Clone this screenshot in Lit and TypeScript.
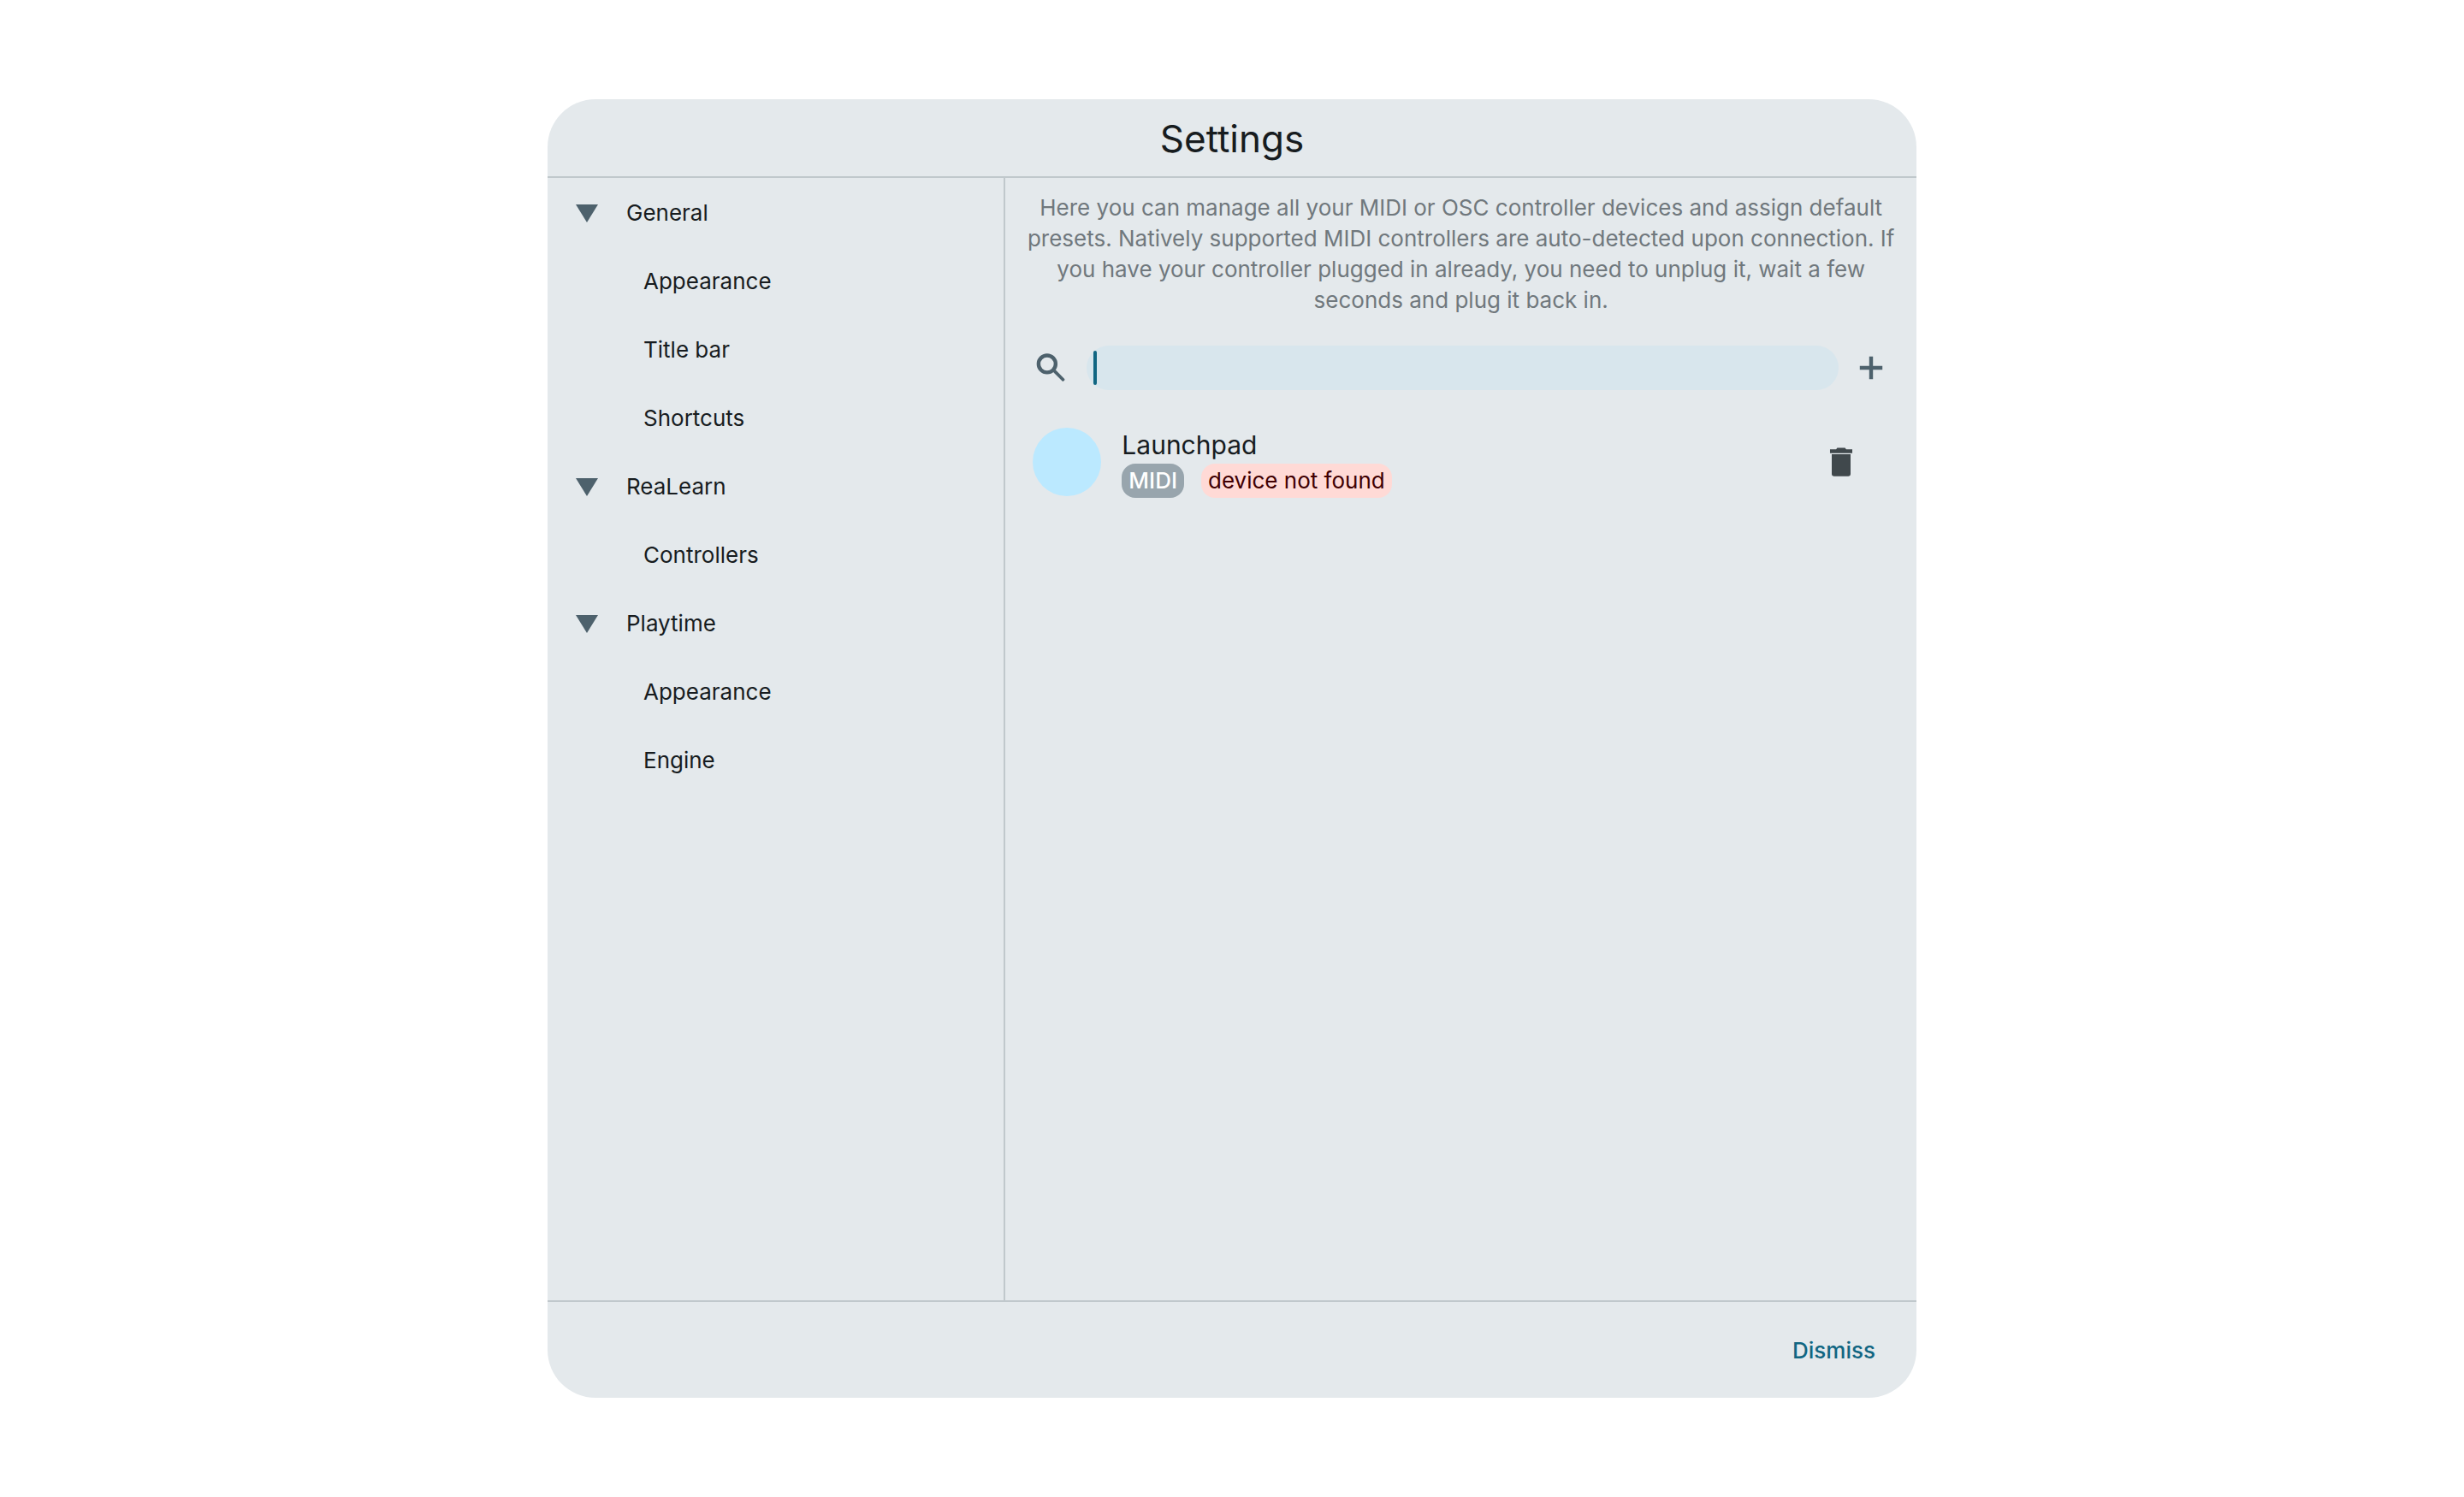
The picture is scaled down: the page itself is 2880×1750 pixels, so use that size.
import { LitElement, html, css, svg } from "lit";
import { customElement, state } from "lit/decorators.js";

interface NavGroup {
  title: string;
  items: string[];
}

interface Device {
  name: string;
  protocol: string;
  problem: string;
}

const NAV: NavGroup[] = [
  { title: "General", items: ["Appearance", "Title bar", "Shortcuts"] },
  { title: "ReaLearn", items: ["Controllers"] },
  { title: "Playtime", items: ["Appearance", "Engine"] },
];

const icon = (shape: unknown) => html`
  <svg class="icon" viewBox="0 0 24 24" aria-hidden="true">${shape}</svg>
`;

const SEARCH = svg`<circle cx="9.2" cy="9.5" r="5.45" fill="none" stroke="currentColor" stroke-width="2.4"/><path d="M12.600 14.700l1.700-1.700 6 6.100q.3.400 0 .8l-.6.600q-.4.300-.8 0l-5.400-5.400v-.3z"/>`;
const ADD = svg`<path d="M19.200 13.200h-6v6h-2.400v-6h-6v-2.400h6v-6h2.400v6h6z"/>`;
const TRASH = svg`<path d="M6 7.100h12v12.500c0 .9-.6 1.500-1.500 1.500h-9c-.9 0-1.500-.6-1.500-1.500z"/><path d="M4.900 3.900h3.900l.7-.9h5l.7.9h3.900v2.500H4.900z"/>`;

@customElement("app-root")
export class AppRoot extends LitElement {
  static styles = css`
    :host {
      display: grid;
      place-items: center;
      box-sizing: border-box;
      min-height: 100vh;
      padding: 116px 24px;
      background: #ffffff;
      color: #171c1f;
      font-family: Inter, "Liberation Sans", sans-serif;
      font-size: 26px;
      line-height: 36px;
    }
    button {
      margin: 0;
      padding: 0;
      border: 0;
      background: none;
      color: inherit;
      font: inherit;
      cursor: pointer;
    }
    .dialog {
      display: flex;
      flex-direction: column;
      align-self: stretch;
      box-sizing: border-box;
      width: 100%;
      max-width: 1600px;
      border-radius: 56px;
      background: #e4e9ec;
      overflow: hidden;
    }
    .header {
      padding: 18px 24px 16px;
      border-bottom: 2px solid #c0c8cc;
      text-align: center;
    }
    .title {
      margin: 0;
      font-size: 44px;
      font-weight: 400;
      line-height: 56px;
    }
    .body {
      display: grid;
      grid-template-columns: 1fr 2fr;
      flex: 1;
    }
    .nav {
      padding-top: 1px;
    }
    .content {
      border-left: 2px solid #c0c8cc;
    }
    .group,
    .item {
      display: flex;
      align-items: center;
      box-sizing: border-box;
      width: 100%;
      height: 80px;
      text-align: left;
      text-decoration: none;
      color: inherit;
    }
    .group {
      gap: 33px;
      padding-left: 33px;
    }
    .item {
      padding-left: 112px;
    }
    .arrow {
      width: 26px;
      height: 22px;
      fill: #4d616c;
    }
    .arrow.closed {
      transform: rotate(-90deg);
    }
    .intro {
      margin: 0;
      padding: 17px 20px 35px;
      color: #70787d;
      text-align: center;
    }
    .search {
      display: flex;
      align-items: center;
      gap: 16px;
      padding: 0 31px 0 32px;
    }
    .search-label,
    .add,
    .remove {
      display: block;
      height: 44px;
      color: #4d616c;
    }
    .icon {
      display: block;
      width: 44px;
      height: 44px;
      fill: currentColor;
    }
    .field {
      position: relative;
      flex: 1;
      margin-left: 3px;
    }
    .input {
      display: block;
      box-sizing: border-box;
      width: 100%;
      height: 52px;
      padding: 0 24px 0 8px;
      border: 0;
      border-radius: 26px;
      outline: 0;
      background: #d8e6ed;
      color: inherit;
      font: inherit;
      caret-color: transparent;
    }
    .caret {
      position: absolute;
      left: 8px;
      top: 6px;
      width: 4px;
      height: 40px;
      border-radius: 2px;
      background: #116682;
      pointer-events: none;
    }
    .devices {
      margin: 0;
      padding: 42px 66px 0 32px;
      list-style: none;
    }
    .device {
      display: flex;
      align-items: center;
      gap: 24px;
    }
    .avatar {
      width: 80px;
      height: 80px;
      border-radius: 50%;
      background: #bbe9ff;
    }
    .details {
      flex: 1;
    }
    .name {
      font-size: 30px;
      line-height: 44px;
    }
    .tags {
      display: flex;
      gap: 20px;
    }
    .tag {
      padding: 2px 8px;
      border-radius: 16px;
    }
    .protocol {
      background: #98a5ad;
      color: #ffffff;
      font-weight: 500;
    }
    .problem {
      background: #ffdad6;
      color: #410002;
    }
    .remove {
      color: #40484c;
    }
    .footer {
      display: flex;
      justify-content: flex-end;
      padding: 31px 24px 29px;
      border-top: 2px solid #c0c8cc;
    }
    .dismiss {
      height: 52px;
      padding: 0 24px;
      color: #116682;
      font-weight: 500;
    }
  `;

  @state() private closed: string[] = [];
  @state() private query = "";
  @state() private devices: Device[] = [
    { name: "Launchpad", protocol: "MIDI", problem: "device not found" },
  ];

  private toggle(title: string) {
    this.closed = this.closed.includes(title)
      ? this.closed.filter((t) => t !== title)
      : [...this.closed, title];
  }

  private renderGroup(group: NavGroup) {
    const closed = this.closed.includes(group.title);
    return html`
      <button
        class="group"
        type="button"
        aria-expanded=${closed ? "false" : "true"}
        @click=${() => this.toggle(group.title)}
      >
        <svg class=${closed ? "arrow closed" : "arrow"} viewBox="0 0 26 22" aria-hidden="true">
          <path d="M0 1h26L13 22z" />
        </svg>
        <span>${group.title}</span>
      </button>
      ${closed ? null : group.items.map((item) => html`<a class="item" href="#">${item}</a>`)}
    `;
  }

  private renderDevice(device: Device) {
    return html`
      <li class="device">
        <span class="avatar"></span>
        <div class="details">
          <div class="name">${device.name}</div>
          <div class="tags">
            <span class="tag protocol">${device.protocol}</span>
            <span class="tag problem">${device.problem}</span>
          </div>
        </div>
        <button
          class="remove"
          type="button"
          aria-label="Delete"
          @click=${() => (this.devices = this.devices.filter((d) => d !== device))}
        >
          ${icon(TRASH)}
        </button>
      </li>
    `;
  }

  render() {
    const visible = this.devices.filter((d) =>
      d.name.toLowerCase().includes(this.query.toLowerCase())
    );
    return html`
      <section class="dialog" role="dialog" aria-labelledby="title">
        <header class="header"><h1 class="title" id="title">Settings</h1></header>
        <div class="body">
          <nav class="nav">${NAV.map((group) => this.renderGroup(group))}</nav>
          <main class="content">
            <p class="intro">
              Here you can manage all your MIDI or OSC controller devices and assign default
              presets. Natively supported MIDI controllers are auto-detected upon connection. If
              you have your controller plugged in already, you need to unplug it, wait a few
              seconds and plug it back in.
            </p>
            <div class="search">
              <label class="search-label" for="search" aria-label="Search">${icon(SEARCH)}</label>
              <div class="field">
                <input
                  class="input"
                  id="search"
                  type="text"
                  aria-label="Search"
                  .value=${this.query}
                  @input=${(e: Event) => (this.query = (e.target as HTMLInputElement).value)}
                />
                ${this.query ? null : html`<span class="caret"></span>`}
              </div>
              <button class="add" type="button" aria-label="Add">${icon(ADD)}</button>
            </div>
            <ul class="devices">
              ${visible.map((device) => this.renderDevice(device))}
            </ul>
          </main>
        </div>
        <footer class="footer"><button class="dismiss" type="button">Dismiss</button></footer>
      </section>
    `;
  }
}
